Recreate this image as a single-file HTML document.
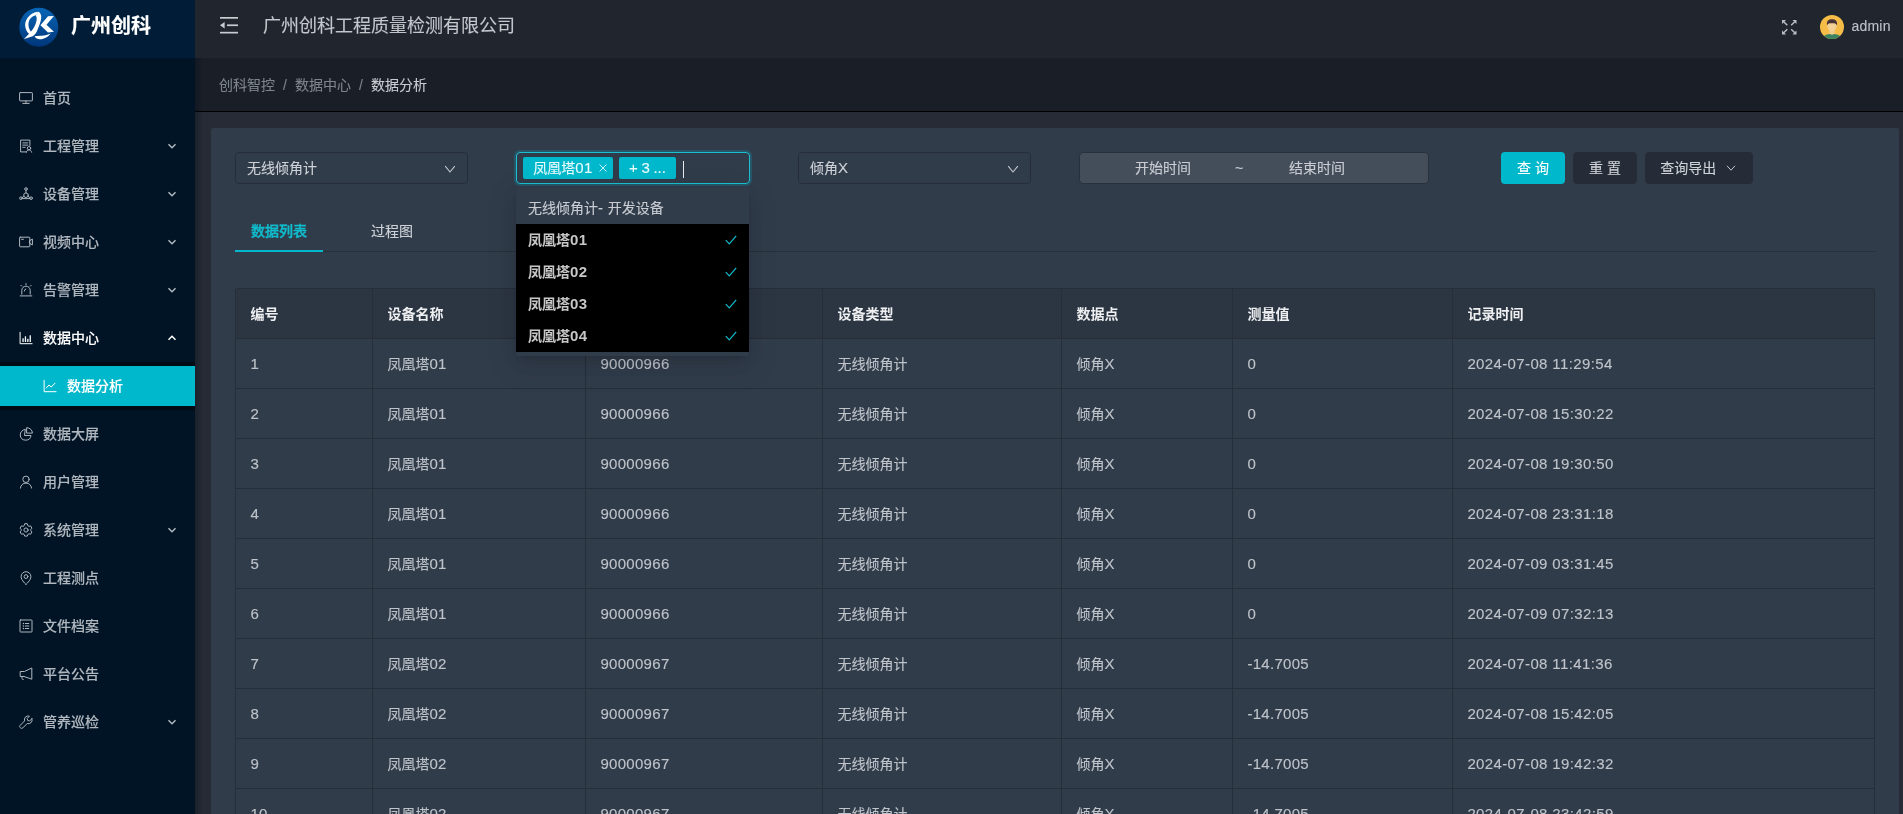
<!DOCTYPE html>
<html lang="zh-CN">
<head>
<meta charset="utf-8">
<title>数据分析 - 广州创科</title>
<style>
*{box-sizing:border-box;margin:0;padding:0}
html,body{width:1903px;height:814px;overflow:hidden}
body{background:#262b36;font-family:"Liberation Sans","Noto Sans CJK SC",sans-serif;font-size:14px;color:#c4c8ce;position:relative;-webkit-text-stroke:.12px currentColor}
#app{position:absolute;left:0;top:0;width:1903px;height:814px;overflow:hidden;will-change:transform}
.abs{position:absolute}
svg{display:block}
/* sidebar */
#side{position:absolute;left:0;top:0;width:195px;height:814px;background:#011425;z-index:5}
#logo{position:absolute;left:0;top:0;width:195px;height:58px;background:#001c36}
#logo .txt{position:absolute;left:71px;top:11px;font-size:20px;line-height:30px;font-weight:700;color:#fff;white-space:nowrap}
#logo svg{position:absolute;left:19px;top:7px}
/*menu*/.mi{position:absolute;left:0;width:195px;height:40px;line-height:40px;margin-top:1px;color:#b0b7bf;white-space:nowrap}
.mi .ic{position:absolute;left:19px;top:13px;width:14px;height:14px}
.mi .t{position:absolute;left:43px;top:0;font-weight:500}
.mi .ar{position:absolute;left:167px;top:15px;width:10px;height:10px}
.mi.open{color:#fff}
#sub{position:absolute;left:0;top:362px;width:195px;height:48px;background:#000b15}
#sub .sel{position:absolute;left:0;top:4px;width:195px;height:40px;background:#00b8cb;color:#fff;line-height:40px}
#sub .sel .ic{position:absolute;left:43px;top:13px;width:14px;height:14px}
#sub .sel .t{position:absolute;left:67px;top:0;font-weight:500}
#sideshadow{position:absolute;left:195px;top:58px;width:8px;height:756px;background:linear-gradient(90deg,rgba(0,10,20,.28),rgba(0,10,20,0));z-index:4}
/* header */
#head{position:absolute;left:195px;top:0;width:1708px;height:58px;background:#20252e}
#head .title{position:absolute;left:68px;top:11px;font-size:18px;line-height:30px;color:#c4c7cc;white-space:nowrap}
#head .user{position:absolute;left:1656.500px;top:15px;line-height:22px;color:#bec2c8;letter-spacing:.2px}
#crumb{position:absolute;left:195px;top:58px;width:1708px;height:54px;background:#191e27;border-bottom:1px solid #000}
#crumb span{position:absolute;top:16px;line-height:22px;white-space:nowrap;color:#7f848c}
#crumb span.cur{color:#c9ccd1}
/* card */
#card{position:absolute;left:211px;top:128px;width:1688px;height:700px;background:#313c4b;border-radius:2px 2px 0 0}
.sel1{position:absolute;top:152px;height:32px;width:233px;border:1px solid #262d38;border-radius:4px;line-height:30px;padding-left:11px;color:#ced2d7;white-space:nowrap}
.sel1 svg{position:absolute;right:11px;top:10px}
#msel{position:absolute;left:516px;top:152px;width:234px;height:32px;border:1px solid #1cbfd0;border-radius:4px;box-shadow:0 0 0 2px rgba(0,184,203,.22)}
.tag{position:absolute;top:4px;height:22px;background:#00b8cb;border-radius:2px;color:#e9fbfd;line-height:22px;white-space:nowrap}
#range{position:absolute;left:1079px;top:152px;width:350px;height:32px;background:#444d5a;border:1px solid #28303c;border-radius:4px;color:#c9cdd3;line-height:30px}
#range span{position:absolute;top:0;white-space:nowrap}
.btn{position:absolute;top:152px;height:32px;border-radius:4px;line-height:32px;background:#252c37;color:#d0d4d9;text-align:center;white-space:nowrap}
.btn.pri{background:#00b8cb;color:#fff}
/* tabs */
#tabline{position:absolute;left:235px;top:251px;width:1640px;height:1px;background:#283039}
#ink{position:absolute;left:235px;top:250px;width:88px;height:2px;background:#00b8cb}
.tab{position:absolute;top:220px;line-height:22px;white-space:nowrap;color:#ced2d7}
.tab.act{color:#10bccd;font-weight:500;-webkit-text-stroke:.4px #10bccd}
/* table */
#tbl{position:absolute;left:235px;top:288px;width:1640px;border-collapse:separate;border-spacing:0;table-layout:fixed;border-left:1px solid #262e39;border-top:1px solid #262e39;border-radius:3px 3px 0 0}
#tbl th,#tbl td{height:50px;border-right:1px solid #262e39;border-bottom:1px solid #262e39;padding:1px 15px 0 14.400px;text-align:left;white-space:nowrap;vertical-align:middle;line-height:22px;font-weight:400}
#tbl th{background:#2c3643;color:#eeeff1;font-weight:700;-webkit-text-stroke:0}
#tbl td{color:#bfc4ca}
.n{font-size:15px;letter-spacing:.3px}
.d{font-size:15px;letter-spacing:.37px}
/* dropdown */
#dd{position:absolute;left:516px;top:188px;width:233px;height:168px;background:#313c4b;border-radius:2px;box-shadow:0 3px 6px -4px rgba(0,0,0,.14),0 6px 16px rgba(0,0,0,.1),0 9px 28px 8px rgba(0,0,0,.06);z-index:9}
#dd .grp{position:absolute;left:12px;top:4px;line-height:32px;color:#c9cdd3;white-space:nowrap}
#dd .opt{position:absolute;left:0;width:233px;height:32px;background:#000;color:#c6c6c6;font-weight:700;-webkit-text-stroke:0;line-height:32px;padding-left:12px;white-space:nowrap}
#dd .opt svg{position:absolute;left:209px;top:11px}
</style>
</head>
<body>
<div id="app">
<!-- SIDEBAR -->
<div id="side">
  <div id="logo">
    <svg width="40" height="40" viewBox="0 0 40 40">
      <defs><linearGradient id="lg" x1="0" y1="0" x2="0" y2="1"><stop offset="0" stop-color="#0765b6"/><stop offset="1" stop-color="#00367a"/></linearGradient></defs>
      <circle cx="19.8" cy="20.2" r="19.5" fill="url(#lg)"/>
      <path d="M19.6 4.800C14 5 8 9 6.300 16 5.500 21 8 25.500 10.700 27.300L12.200 24.900C10 22.500 9 19 9.600 15.500 10.500 11.500 13 9 16.600 8.200z" fill="#fff"/>
      <path d="M16.600 8.200C18 10 17.800 12 17.500 13.700 16.800 17 15.500 19.500 14.300 21.400 12.500 24 10.500 26.500 4.800 32 10 30.500 13.500 30 15.500 27.800 17.500 25.500 18.500 23 19 21.400 20.500 18 21.500 15.500 21.900 13.100 22.600 10 22.500 7 19.600 4.800z" fill="#fff"/>
      <path d="M29 9.300L34.900 9.100 27.500 17.800 34.900 24.800 29 25.500 21.400 18.300z" fill="#fff"/>
      <path d="M15.500 29.200C18 28.800 20 28.900 22.500 28.700 26 28.400 29 27.600 31.800 26.400 29.500 29.500 25 32.300 20.800 32.200 18.500 32.100 16.500 31 15.500 29.200z" fill="#fff"/>
    </svg>
    <div class="txt">广州创科</div>
  </div>
  <div class="mi" style="top:77px"><svg class="ic" width="14" height="14" viewBox="0 0 14 14"><g fill="none" stroke="currentColor" stroke-width="1" stroke-linecap="round" stroke-linejoin="round"><rect x="0.6" y="1.6" width="12.8" height="8.3" rx="0.6"/><path d="M7 10v2.2M3.800 12.400h6.400"/></g></svg><span class="t">首页</span></div>
  <div class="mi" style="top:125px"><svg class="ic" width="14" height="14" viewBox="0 0 14 14"><g fill="none" stroke="currentColor" stroke-width="1" stroke-linecap="round" stroke-linejoin="round"><path d="M7.500 12.900H1.600V1.100h9.300v5.400"/><path d="M3.800 3.900h5M3.800 6.100h5M3.800 8.300h2.400"/><circle cx="10" cy="9.200" r="1.700"/><path d="M7.400 13.200c.3-1.500 1.300-2.300 2.600-2.300s2.300.8 2.600 2.300"/></g></svg><span class="t">工程管理</span><svg class="ar" width="10" height="10" viewBox="0 0 10 10"><path d="M1.500 3.300L5 6.700l3.500-3.400" fill="none" stroke="currentColor" stroke-width="1.500"/></svg></div>
  <div class="mi" style="top:173px"><svg class="ic" width="14" height="14" viewBox="0 0 14 14"><g fill="none" stroke="currentColor" stroke-width="1" stroke-linecap="round" stroke-linejoin="round"><circle cx="7" cy="2" r="1.300"/><circle cx="1.900" cy="11.200" r="1.300"/><circle cx="12.100" cy="11.200" r="1.300"/><circle cx="7" cy="8.200" r="2.300"/><path d="M7 3.300v2.600M3.100 10.600l1.900-1.200M10.900 10.600l-1.900-1.200M3.200 11.600h7.600"/></g></svg><span class="t">设备管理</span><svg class="ar" width="10" height="10" viewBox="0 0 10 10"><path d="M1.500 3.300L5 6.700l3.500-3.400" fill="none" stroke="currentColor" stroke-width="1.500"/></svg></div>
  <div class="mi" style="top:221px"><svg class="ic" width="14" height="14" viewBox="0 0 14 14"><g fill="none" stroke="currentColor" stroke-width="1" stroke-linecap="round" stroke-linejoin="round"><rect x="0.600" y="2.200" width="10.200" height="9.600" rx="0.600"/><path d="M10.800 5.600l2.600-1.500v5.800l-2.600-1.500z"/><path d="M2.600 4.300h1.800"/></g></svg><span class="t">视频中心</span><svg class="ar" width="10" height="10" viewBox="0 0 10 10"><path d="M1.500 3.300L5 6.700l3.500-3.400" fill="none" stroke="currentColor" stroke-width="1.500"/></svg></div>
  <div class="mi" style="top:269px"><svg class="ic" width="14" height="14" viewBox="0 0 14 14"><g fill="none" stroke="currentColor" stroke-width="1" stroke-linecap="round" stroke-linejoin="round"><path d="M2.800 11.200V7.400a4.200 4.200 0 018.400 0V11.200"/><path d="M1.200 12.900h11.600"/><path d="M7 .600v1.200M1.800 2.300l.9.900M12.200 2.300l-.9.900"/><path d="M5.300 8a1.900 1.900 0 011.500-2"/></g></svg><span class="t">告警管理</span><svg class="ar" width="10" height="10" viewBox="0 0 10 10"><path d="M1.500 3.300L5 6.700l3.500-3.400" fill="none" stroke="currentColor" stroke-width="1.500"/></svg></div>
  <div class="mi open" style="top:317px"><svg class="ic" width="14" height="14" viewBox="0 0 14 14"><g fill="none" stroke="currentColor" stroke-width="1" stroke-linecap="round" stroke-linejoin="round"><path d="M1.100 1.300v11.400h12"/></g><g fill="currentColor"><rect x="3.400" y="7.300" width="1.300" height="3.700"/><rect x="5.800" y="5.300" width="1.300" height="5.700"/><rect x="8.200" y="7.800" width="1.300" height="3.200"/><rect x="10.600" y="4.300" width="1.300" height="6.700"/></g></svg><span class="t">数据中心</span><svg class="ar" width="10" height="10" viewBox="0 0 10 10"><path d="M1.500 6.700L5 3.300l3.500 3.400" fill="none" stroke="currentColor" stroke-width="1.500"/></svg></div>
  <div class="mi" style="top:413px"><svg class="ic" width="14" height="14" viewBox="0 0 14 14"><g fill="none" stroke="currentColor" stroke-width="1" stroke-linecap="round" stroke-linejoin="round"><path d="M5.900 2.400a5.400 5.400 0 106.100 6.100H5.900z"/><path d="M8 .700a5.400 5.400 0 015.400 5.400H8z"/></g></svg><span class="t">数据大屏</span></div>
  <div class="mi" style="top:461px"><svg class="ic" width="14" height="14" viewBox="0 0 14 14"><g fill="none" stroke="currentColor" stroke-width="1" stroke-linecap="round" stroke-linejoin="round"><circle cx="7" cy="4.300" r="3.200"/><path d="M1.400 13.100c.3-3 2.600-5 5.600-5s5.300 2 5.600 5"/></g></svg><span class="t">用户管理</span></div>
  <div class="mi" style="top:509px"><svg class="ic" width="14" height="14" viewBox="0 0 14 14"><g fill="none" stroke="currentColor" stroke-width="1" stroke-linecap="round" stroke-linejoin="round"><circle cx="7" cy="7" r="2.100"/><path d="M5.700 1l-.5 1.600-1.200.7-1.600-.4-1.300 2.300 1.100 1.200v1.300L1.100 8.900l1.300 2.300 1.600-.4 1.200.7.500 1.600h2.600l.5-1.600 1.200-.7 1.600.4 1.300-2.300-1.100-1.200V6.400l1.100-1.200-1.300-2.300-1.600.4-1.200-.7L8.300 1z"/></g></svg><span class="t">系统管理</span><svg class="ar" width="10" height="10" viewBox="0 0 10 10"><path d="M1.500 3.300L5 6.700l3.500-3.400" fill="none" stroke="currentColor" stroke-width="1.500"/></svg></div>
  <div class="mi" style="top:557px"><svg class="ic" width="14" height="14" viewBox="0 0 14 14"><g fill="none" stroke="currentColor" stroke-width="1" stroke-linecap="round" stroke-linejoin="round"><path d="M7 13.400S2.100 9.300 2.100 5.600a4.900 4.900 0 019.800 0C11.900 9.300 7 13.400 7 13.400z"/><circle cx="7" cy="5.600" r="1.900"/></g></svg><span class="t">工程测点</span></div>
  <div class="mi" style="top:605px"><svg class="ic" width="14" height="14" viewBox="0 0 14 14"><g fill="none" stroke="currentColor" stroke-width="1" stroke-linecap="round" stroke-linejoin="round"><rect x="1" y="1" width="12" height="12" rx="0.500"/><path d="M6.300 4.500h3.500M6.300 7h3.500M6.300 9.500h3.500"/></g><g fill="currentColor"><circle cx="4.400" cy="4.500" r=".7"/><circle cx="4.400" cy="7" r=".7"/><circle cx="4.400" cy="9.500" r=".7"/></g></svg><span class="t">文件档案</span></div>
  <div class="mi" style="top:653px"><svg class="ic" width="14" height="14" viewBox="0 0 14 14"><g fill="none" stroke="currentColor" stroke-width="1" stroke-linecap="round" stroke-linejoin="round"><path d="M12.800 1.400v10.800L5 9.500H1.200v-5H5z"/><path d="M3 9.600v1.700c0 .8.500 1.300 1.300 1.300"/></g></svg><span class="t">平台公告</span></div>
  <div class="mi" style="top:701px"><svg class="ic" width="14" height="14" viewBox="0 0 14 14"><g fill="none" stroke="currentColor" stroke-width="1" stroke-linecap="round" stroke-linejoin="round"><path d="M12.900 3.700l-2.300 2.300-1.900-.6-.6-1.900L10.400 1.200a3.700 3.700 0 00-4.800 4.700L1.200 10.300a1.500 1.500 0 000 2.200l.4.400a1.500 1.500 0 002.200 0l4.400-4.400a3.700 3.700 0 004.700-4.800z"/></g></svg><span class="t">管养巡检</span><svg class="ar" width="10" height="10" viewBox="0 0 10 10"><path d="M1.500 3.300L5 6.700l3.500-3.400" fill="none" stroke="currentColor" stroke-width="1.500"/></svg></div>
  <div id="sub"><div class="sel"><svg class="ic" width="14" height="14" viewBox="0 0 14 14"><g fill="none" stroke="currentColor" stroke-width="1" stroke-linecap="round" stroke-linejoin="round"><path d="M1.100 1.300v11.400h12"/><path d="M3.300 9l2.700-3 2.200 2 3.900-3.900"/></g></svg><span class="t">数据分析</span></div></div>
</div>
<div id="sideshadow"></div>

<!-- HEADER -->
<div id="head">
  <svg class="abs" style="left:25px;top:17px" width="18" height="17" viewBox="0 0 18 17"><g fill="#c9ccd1"><rect x="0" y="0" width="18" height="1.700"/><rect x="7" y="7.400" width="11" height="1.700"/><rect x="0" y="14.800" width="18" height="1.700"/><path d="M0 8.250L4.600 5v6.500z"/></g></svg>
  <div class="title">广州创科工程质量检测有限公司</div>
  <svg class="abs" style="left:1587px;top:20px" width="14.500" height="14.500" viewBox="0 0 15 15"><g stroke="#b9bdc3" stroke-width="1.500" fill="none"><path d="M1.500 1.500L5.500 5.500M13.500 1.500L9.500 5.500M1.500 13.500L5.500 9.500M13.500 13.500L9.500 9.500"/></g><g fill="#b9bdc3"><path d="M0 0h4.200L0 4.200zM15 0v4.200L10.800 0zM0 15v-4.200L4.200 15zM15 15h-4.200L15 10.800z"/></g></svg>
  <svg class="abs" style="left:1625px;top:15px" width="24" height="24" viewBox="0 0 24 24">
    <defs><clipPath id="av"><circle cx="12" cy="12" r="12"/></clipPath></defs>
    <g clip-path="url(#av)"><rect width="24" height="24" fill="#f5bd47"/>
    <path d="M2 24c1-4 5-5 10-5s9 1 10 5z" fill="#3b8461"/>
    <path d="M9.500 13h5v5.500l-2.500 1.500-2.500-1.500z" fill="#efcb8e"/>
    <path d="M7.300 9.500c0-2 2-3 4.700-3s4.700 1 4.700 3c0 4-2 7-4.700 7s-4.700-3-4.700-7z" fill="#f2d197"/>
    <path d="M7 10.500C6.300 6 8.500 4.300 12 4.300s5.700 1.700 5 6.200c-.8-1.800-1.500-2.300-5-2.300s-4.200.5-5 2.300z" fill="#4b3436"/></g>
  </svg>
  <div class="user">admin</div>
</div>
<div id="crumb">
  <span style="left:24px">创科智控</span><span style="left:88px">/</span><span style="left:100px">数据中心</span><span style="left:164px">/</span><span class="cur" style="left:176px">数据分析</span>
</div>

<!-- CARD -->
<div id="card"></div>
<div class="sel1" style="left:235px">无线倾角计<svg width="12" height="12" viewBox="0 0 12 12"><path d="M1.200 3.200L6 9l4.800-5.800" fill="none" stroke="#c4c8ce" stroke-width="1.100"/></svg></div>
<div id="msel">
  <div class="tag" style="left:6px;width:90px"><span class="abs" style="left:10.300px;top:0">凤凰塔<span class="n">01</span></span><svg class="abs" style="left:76px;top:7px" width="8" height="8" viewBox="0 0 8 8"><path d="M.5.500l7 7M7.500.500l-7 7" stroke="#c5f1f5" stroke-width="1"/></svg></div>
  <div class="tag" style="left:102px;width:57px"><span class="abs n" style="left:10px;top:0;letter-spacing:0;word-spacing:-.5px">+ 3 ...</span></div>
  <div class="abs" style="left:166px;top:8px;width:1px;height:17px;background:#e6e9ec"></div>
</div>
<div class="sel1" style="left:798px">倾角<span class="n">X</span><svg width="12" height="12" viewBox="0 0 12 12"><path d="M1.200 3.200L6 9l4.800-5.800" fill="none" stroke="#c4c8ce" stroke-width="1.100"/></svg></div>
<div id="range"><span style="left:55px">开始时间</span><span style="left:155px">~</span><span style="left:209px">结束时间</span></div>
<div class="btn pri" style="left:1501px;width:64px">查 询</div>
<div class="btn" style="left:1573px;width:64px">重 置</div>
<div class="btn" style="left:1645px;width:108px;text-align:left;padding-left:15.300px">查询导出<svg class="abs" style="left:81px;top:11px" width="10" height="10" viewBox="0 0 10 10"><path d="M1 2.800L5 7.200l4-4.400" fill="none" stroke="#c4c8ce" stroke-width="1"/></svg></div>

<div id="tabline"></div><div id="ink"></div>
<div class="tab act" style="left:251px">数据列表</div>
<div class="tab" style="left:371px">过程图</div>

<table id="tbl">
<colgroup><col style="width:137px"><col style="width:213px"><col style="width:237px"><col style="width:239px"><col style="width:171px"><col style="width:220px"><col style="width:422px"></colgroup>
<thead><tr><th>编号</th><th>设备名称</th><th>设备编号</th><th>设备类型</th><th>数据点</th><th>测量值</th><th>记录时间</th></tr></thead>
<tbody>
<tr><td><span class="n">1</span></td><td>凤凰塔<span class="n">01</span></td><td><span class="n">90000966</span></td><td>无线倾角计</td><td>倾角<span class="n">X</span></td><td><span class="n">0</span></td><td><span class="d">2024-07-08 11:29:54</span></td></tr>
<tr><td><span class="n">2</span></td><td>凤凰塔<span class="n">01</span></td><td><span class="n">90000966</span></td><td>无线倾角计</td><td>倾角<span class="n">X</span></td><td><span class="n">0</span></td><td><span class="d">2024-07-08 15:30:22</span></td></tr>
<tr><td><span class="n">3</span></td><td>凤凰塔<span class="n">01</span></td><td><span class="n">90000966</span></td><td>无线倾角计</td><td>倾角<span class="n">X</span></td><td><span class="n">0</span></td><td><span class="d">2024-07-08 19:30:50</span></td></tr>
<tr><td><span class="n">4</span></td><td>凤凰塔<span class="n">01</span></td><td><span class="n">90000966</span></td><td>无线倾角计</td><td>倾角<span class="n">X</span></td><td><span class="n">0</span></td><td><span class="d">2024-07-08 23:31:18</span></td></tr>
<tr><td><span class="n">5</span></td><td>凤凰塔<span class="n">01</span></td><td><span class="n">90000966</span></td><td>无线倾角计</td><td>倾角<span class="n">X</span></td><td><span class="n">0</span></td><td><span class="d">2024-07-09 03:31:45</span></td></tr>
<tr><td><span class="n">6</span></td><td>凤凰塔<span class="n">01</span></td><td><span class="n">90000966</span></td><td>无线倾角计</td><td>倾角<span class="n">X</span></td><td><span class="n">0</span></td><td><span class="d">2024-07-09 07:32:13</span></td></tr>
<tr><td><span class="n">7</span></td><td>凤凰塔<span class="n">02</span></td><td><span class="n">90000967</span></td><td>无线倾角计</td><td>倾角<span class="n">X</span></td><td><span class="n">-14.7005</span></td><td><span class="d">2024-07-08 11:41:36</span></td></tr>
<tr><td><span class="n">8</span></td><td>凤凰塔<span class="n">02</span></td><td><span class="n">90000967</span></td><td>无线倾角计</td><td>倾角<span class="n">X</span></td><td><span class="n">-14.7005</span></td><td><span class="d">2024-07-08 15:42:05</span></td></tr>
<tr><td><span class="n">9</span></td><td>凤凰塔<span class="n">02</span></td><td><span class="n">90000967</span></td><td>无线倾角计</td><td>倾角<span class="n">X</span></td><td><span class="n">-14.7005</span></td><td><span class="d">2024-07-08 19:42:32</span></td></tr>
<tr><td><span class="n">10</span></td><td>凤凰塔<span class="n">02</span></td><td><span class="n">90000967</span></td><td>无线倾角计</td><td>倾角<span class="n">X</span></td><td><span class="n">-14.7005</span></td><td><span class="d">2024-07-08 23:42:59</span></td></tr>
</tbody>
</table>

<!-- DROPDOWN -->
<div id="dd">
  <div class="grp">无线倾角计<span class="n">- </span>开发设备</div>
  <div class="opt" style="top:36px">凤凰塔<span class="n">01</span><svg width="12" height="10" viewBox="0 0 12 10"><path d="M.8 5.200L4.300 8.800 11.200.800" fill="none" stroke="#10bccd" stroke-width="1.200"/></svg></div>
  <div class="opt" style="top:68px">凤凰塔<span class="n">02</span><svg width="12" height="10" viewBox="0 0 12 10"><path d="M.8 5.200L4.300 8.800 11.200.800" fill="none" stroke="#10bccd" stroke-width="1.200"/></svg></div>
  <div class="opt" style="top:100px">凤凰塔<span class="n">03</span><svg width="12" height="10" viewBox="0 0 12 10"><path d="M.8 5.200L4.300 8.800 11.200.800" fill="none" stroke="#10bccd" stroke-width="1.200"/></svg></div>
  <div class="opt" style="top:132px">凤凰塔<span class="n">04</span><svg width="12" height="10" viewBox="0 0 12 10"><path d="M.8 5.200L4.300 8.800 11.200.800" fill="none" stroke="#10bccd" stroke-width="1.200"/></svg></div>
</div>
</div>
</body>
</html>
